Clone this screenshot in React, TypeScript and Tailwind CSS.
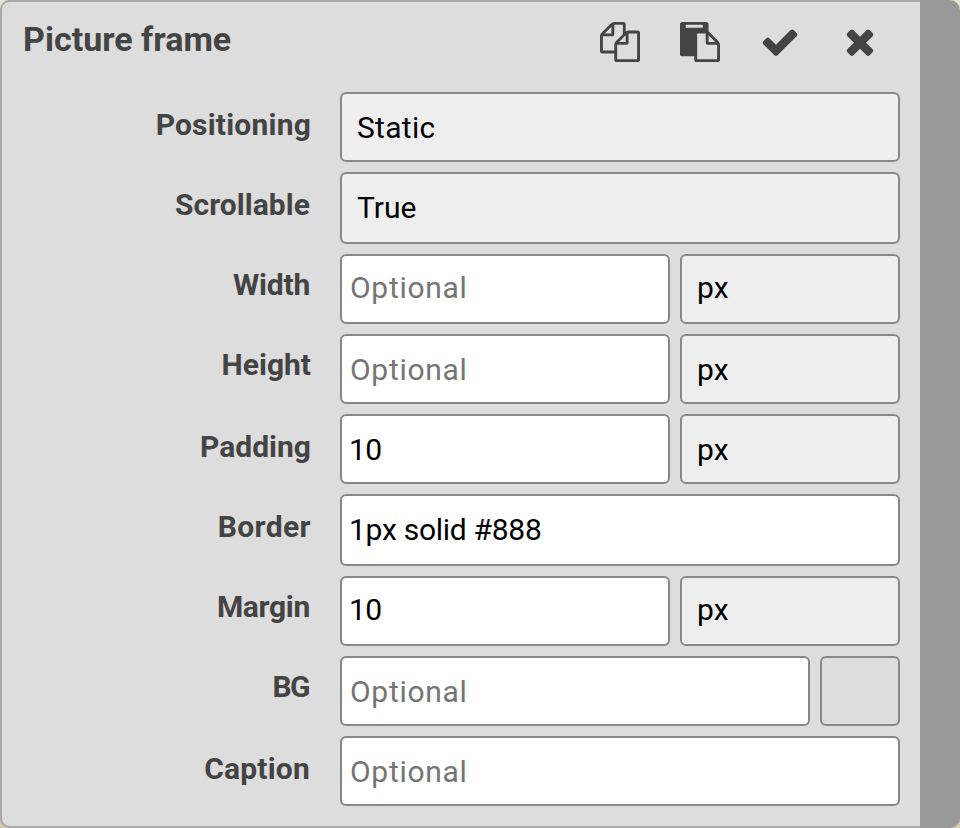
import React from 'react';

const ICONS = {
  copy: 'M1696 384q40 0 68 28t28 68v1216q0 40-28 68t-68 28h-960q-40 0-68-28t-28-68v-288h-544q-40 0-68-28t-28-68v-672q0-40 20-88t48-76l408-408q28-28 76-48t88-20h416q40 0 68 28t28 68v328q68-40 128-40h416zm-544 213l-299 299h299v-299zm-640-384l-299 299h299v-299zm196 647l316-316v-416h-384v416q0 40-28 68t-68 28h-416v640h512v-256q0-40 20-88t48-76zm956 804v-1152h-384v416q0 40-28 68t-68 28h-416v640h896z',
  paste: 'M768 1664h896v-640h-416q-40 0-68-28t-28-68v-416h-384v1152zm256-1440v-64q0-13-9.5-22.5t-22.5-9.5h-704q-13 0-22.5 9.5t-9.5 22.5v64q0 13 9.5 22.5t22.5 9.5h704q13 0 22.5-9.5t9.5-22.5zm256 672h299l-299-299v299zm512 128v672q0 40-28 68t-68 28h-960q-40 0-68-28t-28-68v-160h-544q-40 0-68-28t-28-68v-1344q0-40 28-68t68-28h1088q40 0 68 28t28 68v328q21 13 36 28l408 408q28 28 48 76t20 88z',
  check: 'M1671 566q0 40-28 68l-724 724-136 136q-28 28-68 28t-68-28l-136-136-362-362q-28-28-28-68t28-68l136-136q28-28 68-28t68 28l294 295 656-657q28-28 68-28t68 28l136 136q28 28 28 68z',
  close: 'M1490 1290q0 40-28 68l-136 136q-28 28-68 28t-68-28l-294-294-294 294q-28 28-68 28t-68-28l-136-136q-28-28-28-68t28-68l294-294-294-294q-28-28-28-68t28-68l136-136q28-28 68-28t68 28l294 294 294-294q28-28 68-28t68 28l136 136q28 28 28 68t-28 68l-294 294 294 294q28 28 28 68z',
};

function Icon({ d }: { d: string }) {
  return (
    <svg viewBox="0 0 1792 1792" className="size-10 fill-[#444]">
      <path d={d} />
    </svg>
  );
}

type Look = 'select' | 'value' | 'placeholder';

const LOOKS: Record<Look, string> = {
  select: 'bg-[#eee] pl-[15px] text-black',
  value: 'bg-white pl-[7px] text-black',
  placeholder: 'bg-white pl-2 text-[#757575]',
};

function Field({ look, text, size, track = '' }: { look: Look; text: string; size: string; track?: string }) {
  return (
    <div className={`rounded-md border-2 border-[#888] whitespace-pre ${LOOKS[look]} ${size}`}>
      <span className={`block ${track}`}>{text}</span>
    </div>
  );
}

function Row({ label, labelStyle, height, children }: { label: string; labelStyle: string; height: string; children: React.ReactNode }) {
  return (
    <div className={`flex gap-[10px] ${height}`}>
      <div className="mr-[19px] w-[309px] shrink-0 text-right font-bold text-[#444]">
        <span className={`block ${labelStyle}`}>{label}</span>
      </div>
      {children}
    </div>
  );
}

const OPTIONAL = 'tracking-[0.7px]';

export default function App() {
  return (
    <div className="h-[828px] w-[960px] bg-linear-to-b from-[#e4e5d0] to-[#d8cca8] font-['Roboto',sans-serif] text-[30px]">
      <div className="flex h-full overflow-hidden rounded-[10px] bg-[#999]">
        <div className="w-[920px] rounded-l-[10px] border-y-2 border-l-2 border-[#aaa] bg-[#ddd]">
          <div className="flex h-[90px] items-start justify-between pr-[40px] pl-[21px]">
            <h1 className="text-[34px] leading-[75px] font-bold text-[#444]">Picture frame</h1>
            <div className="mt-5 flex gap-10">
              <Icon d={ICONS.copy} />
              <Icon d={ICONS.paste} />
              <Icon d={ICONS.check} />
              <Icon d={ICONS.close} />
            </div>
          </div>
          <div className="flex flex-col gap-[10px]">
            <Row label="Positioning" labelStyle="leading-[66px] tracking-[0.2px]" height="h-[70px]">
              <Field look="select" text="Static" size="w-[560px] leading-[67px]" track="tracking-[0.3px]" />
            </Row>
            <Row label="Scrollable" labelStyle="leading-[66px] pr-px tracking-[0.05px]" height="h-[72px]">
              <Field look="select" text="True" size="w-[560px] leading-[67px]" />
            </Row>
            <Row label="Width" labelStyle="leading-[62px] pr-px tracking-[-0.2px]" height="h-[70px]">
              <Field look="placeholder" text="Optional" size="w-[330px] leading-[63px]" track={OPTIONAL} />
              <Field look="select" text="px" size="w-[220px] leading-[63px]" />
            </Row>
            <Row label="Height" labelStyle="leading-[62px]" height="h-[70px]">
              <Field look="placeholder" text="Optional" size="w-[330px] leading-[67px]" track={OPTIONAL} />
              <Field look="select" text="px" size="w-[220px] leading-[67px]" />
            </Row>
            <Row label="Padding" labelStyle="leading-[66px]" height="h-[70px]">
              <Field look="value" text="10" size="w-[330px] leading-[67px]" track="tracking-[-0.5px]" />
              <Field look="select" text="px" size="w-[220px] leading-[67px]" />
            </Row>
            <Row label="Border" labelStyle="leading-[66px] tracking-[0.4px]" height="h-[72px]">
              <Field look="value" text="1px solid #888" size="w-[560px] leading-[67px]" track="tracking-[-0.28px]" />
            </Row>
            <Row label="Margin" labelStyle="leading-[62px] pr-px tracking-[-0.3px]" height="h-[70px]">
              <Field look="value" text="10" size="w-[330px] leading-[63px]" track="tracking-[-0.5px]" />
              <Field look="select" text="px" size="w-[220px] leading-[63px]" />
            </Row>
            <Row label="BG" labelStyle="leading-[62px] pr-[2px] tracking-[-1.5px]" height="h-[70px]">
              <Field look="placeholder" text="Optional" size="w-[470px] leading-[67px]" track={OPTIONAL} />
              <div className="w-20 rounded-md border-2 border-[#888] bg-[#ddd]" />
            </Row>
            <Row label="Caption" labelStyle="leading-[66px] pr-px tracking-[0.2px]" height="h-[70px]">
              <Field look="placeholder" text="Optional" size="w-[560px] leading-[67px]" track={OPTIONAL} />
            </Row>
          </div>
        </div>
      </div>
    </div>
  );
}
